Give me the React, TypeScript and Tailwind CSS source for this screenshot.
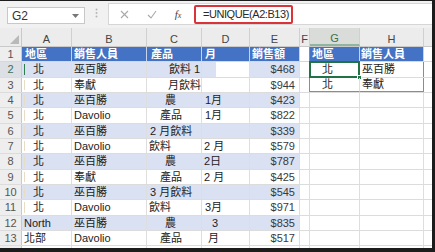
const FONT = "font-['Liberation_Sans','Noto_Sans_CJK_TC',sans-serif]";

type Row = {
  n: string;
  a: string;
  ap?: string;
  b: string;
  c: string;
  cp: string;
  d: string;
  dp: string;
  e: string;
};

const rows: Row[] = [
  { n: "2", a: "北", b: "巫百勝", c: "飲料 1", cp: "pl-[22px]", d: "", dp: "", e: "$468" },
  { n: "3", a: "北", b: "奉獻", c: "月飲料", cp: "pl-[21px]", d: "", dp: "", e: "$944" },
  { n: "4", a: "北", b: "巫百勝", c: "農", cp: "pl-[18px]", d: "1月", dp: "pl-[3px]", e: "$423" },
  { n: "5", a: "北", b: "Davolio", c: "產品", cp: "pl-[13px]", d: "1月", dp: "pl-[3px]", e: "$822" },
  { n: "6", a: "北", b: "巫百勝", c: "2 月飲料", cp: "pl-[3px]", d: "", dp: "", e: "$339" },
  { n: "7", a: "北", b: "Davolio", c: "飲料", cp: "pl-[2px]", d: "2 月", dp: "pl-[2px]", e: "$579" },
  { n: "8", a: "北", b: "巫百勝", c: "農", cp: "pl-[18px]", d: "2日", dp: "pl-[2px]", e: "$787" },
  { n: "9", a: "北", b: "奉獻", c: "產品", cp: "pl-[13px]", d: "2 月", dp: "pl-[2px]", e: "$425" },
  { n: "10", a: "北", b: "巫百勝", c: "3 月飲料", cp: "pl-[3px]", d: "", dp: "", e: "$545" },
  { n: "11", a: "北", b: "Davolio", c: "飲料", cp: "pl-[2px]", d: "3月", dp: "pl-[3px]", e: "$971" },
  { n: "12", a: "North", ap: "pl-[2px]", b: "巫百勝", c: "農", cp: "pl-[18px]", d: "3", dp: "pl-[10px]", e: "$835" },
  { n: "13", a: "北部", ap: "pl-[2px]", b: "Davolio", c: "產品", cp: "pl-[13px]", d: "月", dp: "pl-[6px]", e: "$517" },
];

// unique() spill result, rows 2-3
const spill = [
  { g: "北", h: "巫百勝" },
  { g: "北", h: "奉獻" },
];

function Toolbar() {
  return (
    <div className="h-[27px] bg-[#f1f1f1] flex items-start shrink-0">
      <div className="mt-[6px] ml-[7px] w-[78px] h-[17px] bg-white border border-[#c8c8c8] flex items-center justify-between pl-[4px] pr-[5px]">
        <span className="text-[12px] text-[#333] leading-none">G2</span>
        <svg width="7" height="4" viewBox="0 0 7 4">
          <path d="M0 0h7L3.5 4z" fill="#777" />
        </svg>
      </div>
      <div className="w-[23px] h-[24px] flex items-center justify-center">
        <svg width="3" height="10" viewBox="0 0 3 10">
          <circle cx="1.5" cy="1.5" r="1" fill="#b5b5b5" />
          <circle cx="1.5" cy="5" r="1" fill="#b5b5b5" />
          <circle cx="1.5" cy="8.5" r="1" fill="#b5b5b5" />
        </svg>
      </div>
      <div className="mt-[2px] flex-1 h-[22px] bg-white border-y border-l border-[#d6d6d6] flex items-center">
        <div className="w-[30px] flex justify-center">
          <svg width="9" height="9" viewBox="0 0 9 9">
            <path d="M1 1l7 7M8 1l-7 7" stroke="#a8a8a8" strokeWidth="1.1" />
          </svg>
        </div>
        <div className="w-[25px] flex justify-center">
          <svg width="10" height="9" viewBox="0 0 10 9">
            <path d="M1 5l3 3 5-7" stroke="#a8a8a8" strokeWidth="1.1" fill="none" />
          </svg>
        </div>
        <div className="w-[28px] flex justify-center">
          <span className="font-['Liberation_Serif',serif] italic text-[11px] text-[#444] leading-none">
            f<span className="text-[8px]">x</span>
          </span>
        </div>
        <div className="ml-[2px] w-[99px] h-[19px] border-2 border-[#d9343a] rounded-[2px] flex items-center pl-[7px]">
          <span className="text-[11px] tracking-[-0.45px] text-[#2a2a2a] leading-none whitespace-nowrap">
            =UNIQUE(A2:B13)
          </span>
        </div>
      </div>
    </div>
  );
}

function ColumnHeaders() {
  const cols = [
    { l: "A", w: "w-[50px]" },
    { l: "B", w: "w-[75px]" },
    { l: "C", w: "w-[55px]" },
    { l: "D", w: "w-[48px]" },
    { l: "E", w: "w-[50px]" },
    { l: "F", w: "w-[10px]" },
  ];
  return (
    <div className="h-[19px] flex bg-[#ececec] border-b border-[#c9c9c9] shrink-0 text-[11px] text-[#444]">
      <div className="w-[22px] h-full border-r border-[#c9c9c9] flex items-end justify-end pr-[2px] pb-[2px]">
        <svg width="9" height="9" viewBox="0 0 9 9">
          <path d="M9 0v9H0z" fill="#b9b9b9" />
        </svg>
      </div>
      {cols.map((c) => (
        <div key={c.l} className={`${c.w} h-full border-r border-[#d0d0d0] flex items-center justify-center pt-[4px]`}>
          {c.l}
        </div>
      ))}
      <div className="w-[50px] h-full bg-[#d9dcd9] border-r border-[#d0d0d0] border-b-2 border-b-[#8fb59f] flex items-center justify-center pt-[4px] text-[#3f6f52]">
        G
      </div>
      <div className="w-[64px] h-full border-r border-[#d0d0d0] flex items-center justify-center pt-[4px]">
        H
      </div>
      <div className="flex-1 h-full" />
    </div>
  );
}

function HeaderRow() {
  const th = "h-full border-r border-[#c7d3ea] bg-[#4472c4] text-white font-bold flex items-center whitespace-nowrap";
  return (
    <div className="h-[15.33px] flex shrink-0 text-[11px] border-b border-[#d8d8d8]">
      <div className="w-[22px] h-full bg-[#eeeeee] border-r border-[#c9c9c9] flex items-center justify-center text-[#555]">1</div>
      <div className={`w-[50px] pl-[3px] ${th}`}>地區</div>
      <div className={`w-[75px] pl-[2px] ${th}`}>銷售人員</div>
      <div className={`w-[55px] pl-[4px] ${th}`}>產品</div>
      <div className={`w-[48px] pl-[3px] ${th}`}>月</div>
      <div className={`w-[50px] pl-[2px] ${th}`}>銷售額</div>
      <div className="w-[10px] h-full border-r border-[#6f8fc8]" />
      <div className={`w-[50px] pl-[2px] ${th}`}>地區</div>
      <div className={`w-[64px] pl-[1px] ${th}`}>銷售人員</div>
      <div className="flex-1 h-full" />
    </div>
  );
}

function DataRow({ r, i }: { r: Row; i: number }) {
  const band = i % 2 === 0 ? "bg-[#d9e1f2]" : "bg-white";
  const td = `h-full border-r border-[#dedede] flex items-center whitespace-nowrap ${band}`;
  const s = spill[i];
  const selectedRow = i === 0;
  return (
    <div className="h-[15.33px] flex shrink-0 text-[11px] text-[#222] border-b border-[#dcdcdc]">
      <div
        className={`w-[22px] h-full border-r border-[#c9c9c9] flex items-center justify-center ${
          selectedRow ? "bg-[#dcdfe3] text-[#3f6f52]" : "bg-[#eeeeee] text-[#555]"
        }`}
      >
        {r.n}
      </div>
      <div className={`w-[50px] relative ${td} ${r.ap ?? "pl-[11px]"}`}>
        {i < 10 && (
          <span className={`absolute left-[2px] top-[2px] bottom-[2px] w-px ${i === 0 ? "bg-[#2e7d4f]" : "bg-[#e7dcc6]"}`} />
        )}
        {r.a}
      </div>
      <div className={`w-[75px] pl-[2px] ${td}`}>{r.b}</div>
      <div className={`w-[55px] ${r.cp} ${td}`}>{r.c}</div>
      <div className={`w-[48px] ${r.dp} ${td} ${i === 0 ? "bg-[linear-gradient(90deg,#d9e1f2_0,#d9e1f2_30%,#ffffff_30%)]" : ""}`}>{r.d}</div>
      <div className={`w-[50px] justify-end pr-[4px] text-[#3a3a3a] ${td}`}>{r.e}</div>
      <div className={`w-[10px] h-full border-r ${s ? "border-[#6f8fc8]" : "border-[#dedede]"}`} />
      <div
        className={`w-[50px] h-full relative flex items-center pl-[12px] border-r border-[#dedede] ${
          i === 1 ? "border-b border-b-[#6f8fc8]" : ""
        }`}
      >
        {s?.g}
        {selectedRow && (
          <>
            <span className="absolute -left-px -top-px -right-px -bottom-px border-2 border-[#217346]" />
            <span className="absolute -right-[3px] -bottom-[3px] w-[5px] h-[5px] bg-[#217346] border border-white" />
          </>
        )}
      </div>
      <div
        className={`w-[64px] h-full flex items-center pl-[2px] border-r ${
          s ? "border-[#6f8fc8]" : "border-[#dedede]"
        } ${i === 1 ? "border-b border-b-[#6f8fc8]" : ""}`}
      >
        {s?.h}
      </div>
      <div className="flex-1 h-full" />
    </div>
  );
}

function FillerRow() {
  const td = "h-full border-r border-[#dedede]";
  return (
    <div className="flex-1 flex">
      <div className="w-[22px] h-full bg-[#eeeeee] border-r border-[#c9c9c9]" />
      <div className={`w-[50px] ${td}`} />
      <div className={`w-[75px] ${td}`} />
      <div className={`w-[55px] ${td}`} />
      <div className={`w-[48px] ${td}`} />
      <div className={`w-[50px] ${td}`} />
      <div className={`w-[10px] ${td}`} />
      <div className={`w-[50px] ${td}`} />
      <div className={`w-[64px] ${td}`} />
      <div className="flex-1 h-full" />
    </div>
  );
}

export default function App() {
  return (
    <div
      className={`w-[435px] h-[252px] overflow-hidden bg-white border-t border-r-[3px] border-b-4 border-[#1c1c1c] flex flex-col ${FONT}`}
    >
      <Toolbar />
      <ColumnHeaders />
      <HeaderRow />
      {rows.map((r, i) => (
        <DataRow key={r.n} r={r} i={i} />
      ))}
      <FillerRow />
    </div>
  );
}
